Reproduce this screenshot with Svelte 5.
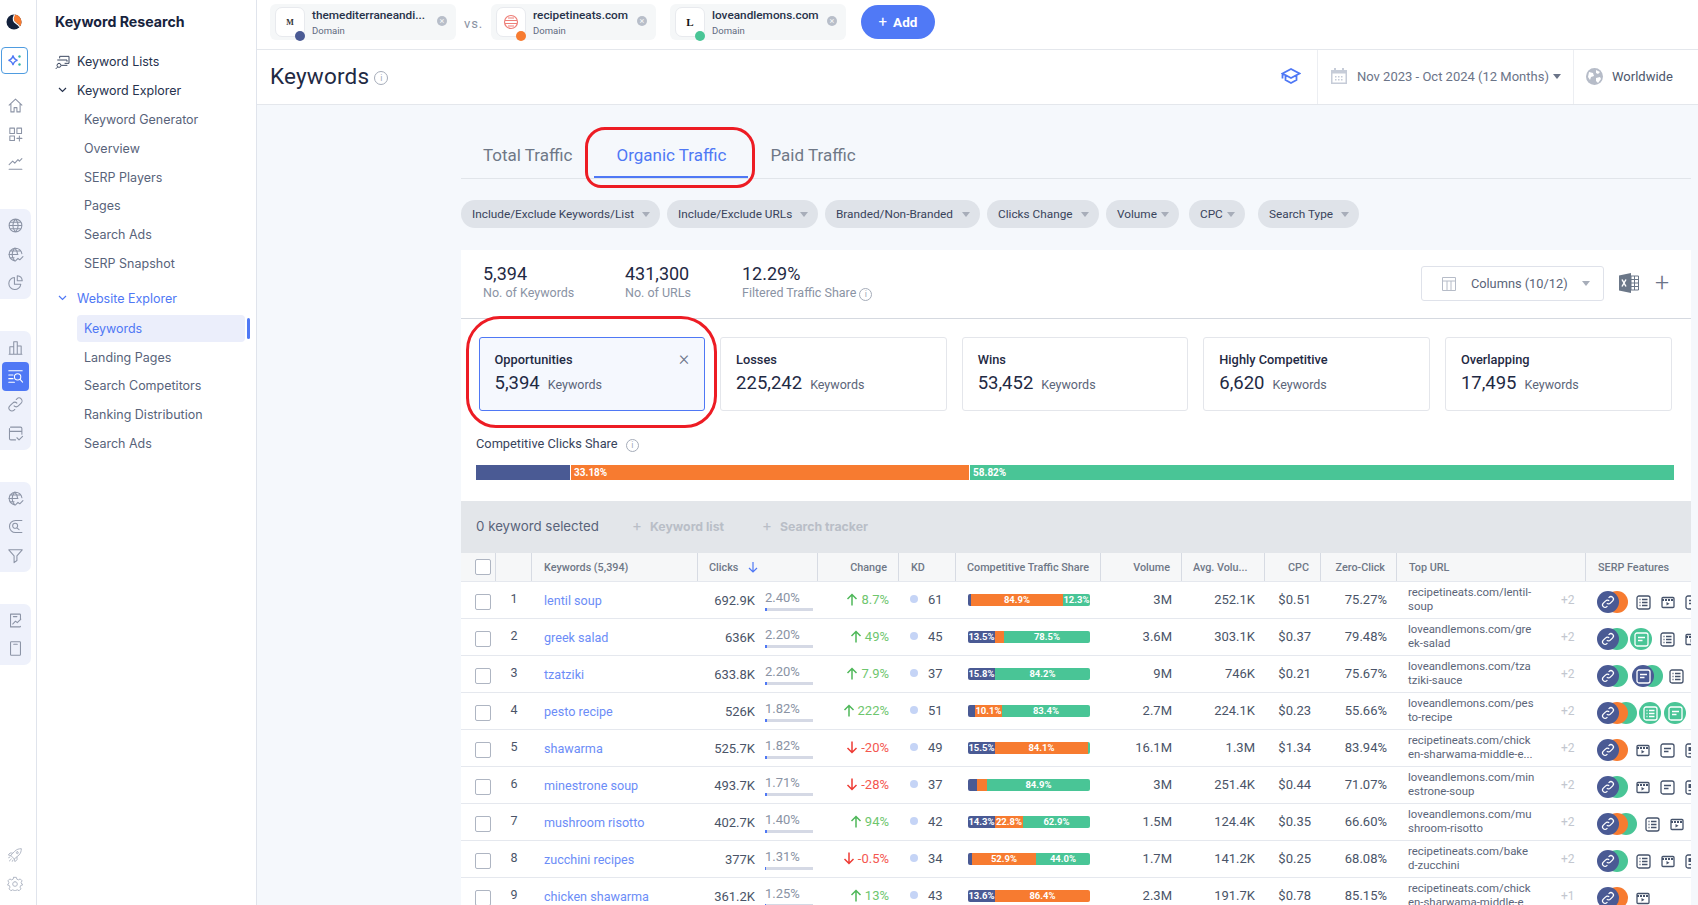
<script>
  // Icon strokes on a 24 box, shared by rail, sidebar and SERP columns.
  const ic = {
    home: 'M3 11.5 12 3l9 8.5M5.500 9.500V21h4.500v-6h4v6h4.500V9.500',
    dash: 'M4 3h6.500v7.500H4zM14 3h6.500v7.500H14zM4 14h6.500v6.500H4zM17.500 14v7M14 17.500h7',
    trend: 'M3 21.500h18M3 15l5-5 3 3 4.500-5 2 2L21 6.500',
    globe: 'M12 3a9 9 0 1 0 0 18a9 9 0 0 0 0-18M3 12h18M4 7.500h16M4 16.500h16M12 3c-5 5-5 13 0 18M12 3c5 5 5 13 0 18',
    globeT: 'M11 21a9 9 0 1 1 10-10M2.500 12h13M4 7h15M4 16.500h6M11 3c-5 5-5 13 0 18M11 3c3 3 4 6 4 9M12 21l3.500-3.500 2.500 2 4.500-4.500',
    pie: 'M10.500 5a8.500 8.500 0 1 0 9 9.500h-9zM14.500 2.500a7.500 7.500 0 0 1 7 7h-7z',
    bars: 'M3 21.500h18M4 21.500V11h5.500v10.500M9.500 21.500V4h5v17.500M14.500 21.500V10H20v11.500',
    sq: 'M2.500 4h19M2.500 10h6M2.500 15h6M2.500 20h8M15 8a4.500 4.500 0 1 0 0 9a4.500 4.500 0 0 0 0-9M18.500 16l3.500 4',
    link: 'M10 14a4 4 0 0 0 6 0l4-4a4 4 0 0 0-6-6l-1 1M14 10a4 4 0 0 0-6 0l-4 4a4 4 0 0 0 6 6l1-1',
    cal: 'M5 3h14a2 2 0 0 1 2 2v8M3.500 5v14a2 2 0 0 0 2 2H12M3.500 9h17M14 18l3 3 5-5',
    at: 'M21 3.500H12a8.500 8.500 0 0 0 0 17h9M11.500 7.500a3.500 3.500 0 1 0 0 7a3.500 3.500 0 0 0 0-7M14 14l3 2.500',
    funnel: 'M2.500 4h19l-7.500 8.500V19l-4 3v-9.500z',
    report: 'M5 3h13a1 1 0 0 1 1 1v7M5 3v18h13a1 1 0 0 0 1-1M9 6.500h5M8 17l4-4 2.500 2 5-5',
    phone: 'M6 2.500h12a1 1 0 0 1 1 1v17a1 1 0 0 1-1 1H6a1 1 0 0 1-1-1v-17a1 1 0 0 1 1-1M9.500 6h5',
    rocket: 'M3.500 21l3-3M2.500 16l2-1M8 21.500l1-2M12 6c2.500-2.500 6-3.500 9.500-3.500C21.500 6 20.500 9.500 18 12l-7 6-5-5zM8 9H4.500L2 12l4 1M15 15v4l-3 3-1-4M15.500 7a1.500 1.500 0 1 0 0 3a1.500 1.500 0 0 0 0-3',
    gear: 'M10 2h4l.8 2.800 2.400 1 2.600-1.400 2.800 2.800-1.400 2.600 1 2.400 2.800.8v0M12 8.500a3.500 3.500 0 1 0 0 7a3.500 3.500 0 0 0 0-7M10 2l-.8 2.800-2.400 1-2.600-1.400-2.800 2.800 1.400 2.600-1 2.400L.5 13.500l.6 0 2.400.8 1 2.400-1.400 2.600 2.800 2.800 2.600-1.400 2.400 1 2.200 0 2.400-1 2.600 1.400 2.800-2.800-1.400-2.600 1-2.400 2.600-.8',
    lists: 'M7 6V3.500h14V14h-6M4 9h14v2M6 14a3 3 0 1 0 0 6a3 3 0 0 0 0-6M3.500 20 1.500 22M10 17h8'
  };

  const railGroups = [
    { plain: true, items: ['home', 'dash', 'trend'] },
    { items: ['globe', 'globeT', 'pie'] },
    { items: ['bars', 'sq', 'link', 'cal'] },
    { items: ['globeT', 'at', 'funnel'] },
    { items: ['report', 'phone'] }
  ];

  const explorer = ['Keyword Generator', 'Overview', 'SERP Players', 'Pages', 'Search Ads', 'SERP Snapshot'];
  const website = ['Keywords', 'Landing Pages', 'Search Competitors', 'Ranking Distribution', 'Search Ads'];

  // label, width, extra space before the pill
  const filters = [
    ['Include/Exclude Keywords/List', 199, 0], ['Include/Exclude URLs', 151, 0], ['Branded/Non-Branded', 155, 0],
    ['Clicks Change', 112, 0], ['Volume', 73, 0], ['CPC', 56, 3], ['Search Type', 101, 6]
  ];
  const cards = [
    ['Opportunities', '5,394'], ['Losses', '225,242'], ['Wins', '53,452'],
    ['Highly Competitive', '6,620'], ['Overlapping', '17,495']
  ];

  const N = '#4a5a94', O = '#f77b30', G = '#49c596';
  // share: pixel widths of the three segments with the percentage they print
  const rows = [
    { kw: 'lentil soup', clicks: '692.9K', pct: '2.40%', w: 5, ch: '8.7%', up: true, kd: 61, share: [[3, ''], [92, '84.9%'], [27, '12.3%']], vol: '3M', avg: '252.1K', cpc: '$0.51', zero: '75.27%', url: 'recipetineats.com/lentil-\nsoup', more: '+2', serp: [[N, O], 'list', 'video', 'doc'] },
    { kw: 'greek salad', clicks: '636K', pct: '2.20%', w: 5, ch: '49%', up: true, kd: 45, share: [[27, '13.5%'], [9, ''], [86, '78.5%']], vol: '3.6M', avg: '303.1K', cpc: '$0.37', zero: '79.48%', url: 'loveandlemons.com/gre\nek-salad', more: '+2', serp: [[N, G], 'gdoc', 'list', 'video'] },
    { kw: 'tzatziki', clicks: '633.8K', pct: '2.20%', w: 5, ch: '7.9%', up: true, kd: 37, share: [[27, '15.8%'], [0, ''], [95, '84.2%']], vol: '9M', avg: '746K', cpc: '$0.21', zero: '75.67%', url: 'loveandlemons.com/tza\ntziki-sauce', more: '+2', serp: [[N, G], 'ndoc', 'list'] },
    { kw: 'pesto recipe', clicks: '526K', pct: '1.82%', w: 4, ch: '222%', up: true, kd: 51, share: [[7, ''], [27, '10.1%'], [88, '83.4%']], vol: '2.7M', avg: '224.1K', cpc: '$0.23', zero: '55.66%', url: 'loveandlemons.com/pes\nto-recipe', more: '+2', serp: [[N, O, G], 'glist', 'gdoc'] },
    { kw: 'shawarma', clicks: '525.7K', pct: '1.82%', w: 4, ch: '-20%', up: false, kd: 49, share: [[27, '15.5%'], [93, '84.1%'], [2, '']], vol: '16.1M', avg: '1.3M', cpc: '$1.34', zero: '83.94%', url: 'recipetineats.com/chick\nen-sharwama-middle-e...', more: '+2', serp: [[N, O], 'video', 'doc', 'card'] },
    { kw: 'minestrone soup', clicks: '493.7K', pct: '1.71%', w: 4, ch: '-28%', up: false, kd: 37, share: [[9, ''], [10, ''], [103, '84.9%']], vol: '3M', avg: '251.4K', cpc: '$0.44', zero: '71.07%', url: 'loveandlemons.com/min\nestrone-soup', more: '+2', serp: [[N, G], 'video', 'doc', 'card'] },
    { kw: 'mushroom risotto', clicks: '402.7K', pct: '1.40%', w: 4, ch: '94%', up: true, kd: 42, share: [[27, '14.3%'], [28, '22.8%'], [67, '62.9%']], vol: '1.5M', avg: '124.4K', cpc: '$0.35', zero: '66.60%', url: 'loveandlemons.com/mu\nshroom-risotto', more: '+2', serp: [[N, O, G], 'list', 'video'] },
    { kw: 'zucchini recipes', clicks: '377K', pct: '1.31%', w: 3, ch: '-0.5%', up: false, kd: 34, share: [[4, ''], [64, '52.9%'], [54, '44.0%']], vol: '1.7M', avg: '141.2K', cpc: '$0.25', zero: '68.08%', url: 'recipetineats.com/bake\nd-zucchini', more: '+2', serp: [[N, G], 'list', 'video', 'card'] },
    { kw: 'chicken shawarma', clicks: '361.2K', pct: '1.25%', w: 3, ch: '13%', up: true, kd: 43, share: [[27, '13.6%'], [95, '86.4%'], [0, '']], vol: '2.3M', avg: '191.7K', cpc: '$0.78', zero: '85.15%', url: 'recipetineats.com/chick\nen-sharwama-middle-e', more: '+1', serp: [[N, O], 'video'] }
  ];
  const segColors = [N, O, G];
</script>

{#snippet icon(name, size = 16)}
  <svg class="ico" width={size} height={size} viewBox="0 0 24 24"><path d={ic[name]} /></svg>
{/snippet}

{#snippet chevron()}
  <svg width="9" height="6" viewBox="0 0 9 6" fill="none" stroke="currentColor" stroke-width="1.200"><path d="M1 1l3.500 3.500L8 1" /></svg>
{/snippet}

{#snippet serpIcon(kind)}
  {#if kind === 'list' || kind === 'glist'}
    <svg width="15" height="15" viewBox="0 0 15 15" fill="none" stroke="currentColor" stroke-width="1.300"><rect x="1" y="1" width="13" height="13" rx="2" /><path d="M3.500 4.500h1M6 4.500h5.500M3.500 7.500h1M6 7.500h5.500M3.500 10.500h1M6 10.500h5.500" /></svg>
  {:else if kind === 'video'}
    <svg width="14" height="13" viewBox="0 0 14 13" fill="none" stroke="currentColor" stroke-width="1.300"><rect x="1" y="1.500" width="12" height="10" rx="1" /><path d="M1 4h12" stroke-width="2" stroke-dasharray="2 1" /><path d="M5.500 6v3.500L8.500 7.700z" fill="currentColor" stroke="none" /></svg>
  {:else if kind === 'card'}
    <svg width="15" height="15" viewBox="0 0 15 15" fill="none" stroke="currentColor" stroke-width="1.300"><rect x="1" y="1" width="13" height="13" rx="2" /><rect x="3.500" y="4" width="3.500" height="4" fill="currentColor" stroke="none" /><path d="M3.500 10.500h8" /></svg>
  {:else}
    <svg width="15" height="15" viewBox="0 0 15 15" fill="none" stroke="currentColor" stroke-width="1.300"><rect x="1" y="1" width="13" height="13" rx="2" /><path d="M4 5.500h7M4 8.500h4.500" /></svg>
  {/if}
{/snippet}

<div class="app">
  <nav class="rail">
    <svg class="logo" width="16" height="16" viewBox="0 0 16 16">
      <circle cx="8" cy="8" r="7.500" fill="#13213c" />
      <path d="M8.500.5a7.500 7.500 0 0 1 5 12.500C14 9.500 8.500 9 8 6 7.700 4 8 2 8.500.5z" fill="#f77b30" />
      <path d="M8.500.5C7.500 2.500 7 4.500 7.500 6.500 8.300 9.500 13 10 13.500 13" fill="none" stroke="#fff" stroke-width="1.100" />
    </svg>
    <div class="spark">
      <svg width="16" height="16" viewBox="0 0 16 16"><path d="M6 2.500c.6 3 1.500 4 4.500 4.800C7.500 8 6.600 9 6 12 5.400 9 4.500 8 1.500 7.300 4.500 6.500 5.400 5.500 6 2.500z" fill="none" stroke="#4f78f5" stroke-width="1.300" /><circle cx="12.500" cy="3.500" r="1.200" fill="#35b6a8" /><circle cx="12.500" cy="11.500" r="1.200" fill="#35b6a8" /></svg>
    </div>
    {#each railGroups as g}
      <div class="group" class:plain={g.plain}>
        {#each g.items as it}
          <span class="rail-btn" class:on={it === 'sq'}>{@render icon(it, 17)}</span>
        {/each}
      </div>
    {/each}
    <div class="rail-foot">
      <span class="rail-btn faint">{@render icon('rocket', 16)}</span>
      <span class="rail-btn faint">{@render icon('gear', 16)}</span>
    </div>
  </nav>

  <aside class="side">
    <h2>Keyword Research</h2>
    <div class="top-item first"><span class="lead">{@render icon('lists', 16)}</span>Keyword Lists</div>
    <div class="top-item"><span class="lead chev">{@render chevron()}</span>Keyword Explorer</div>
    <div class="subs one">{#each explorer as s}<div class="sub">{s}</div>{/each}</div>
    <div class="top-item blue"><span class="lead chev">{@render chevron()}</span>Website Explorer</div>
    <div class="subs two">{#each website as s, i}<div class="sub" class:active={i === 0}>{s}</div>{/each}</div>
  </aside>

  <main class="main">
    <header class="topbar">
      <div class="chip c1">
        <span class="fav"><b class="m">M</b><i style="background:{N}"></i></span>
        <span class="chip-txt"><b>themediterraneandi...</b><small>Domain</small></span>
        <span class="x">×</span>
      </div>
      <span class="vs">vs.</span>
      <div class="chip c2">
        <span class="fav">
          <svg width="16" height="16" viewBox="0 0 16 16" fill="none" stroke="#ee7f78" stroke-width="1.200"><circle cx="8" cy="8" r="6.500" /><path d="M2 6.500h12M2 9.500h12M5 4h6M5 12h6" /></svg>
          <i style="background:{O}"></i>
        </span>
        <span class="chip-txt"><b>recipetineats.com</b><small>Domain</small></span>
        <span class="x">×</span>
      </div>
      <div class="chip c3">
        <span class="fav"><b class="l">L</b><i style="background:{G}"></i></span>
        <span class="chip-txt"><b>loveandlemons.com</b><small>Domain</small></span>
        <span class="x">×</span>
      </div>
      <button class="add"><span>+</span>Add</button>
    </header>

    <section class="head">
      <h1>Keywords</h1>
      <span class="info big">i</span>
      <span class="cap">
        <svg width="20" height="18" viewBox="0 0 20 18" fill="none" stroke="#4f78f5" stroke-width="1.800"><path d="M1.500 6.500 10 2l8.500 4.500L10 11zM4.500 8.500V13l5.500 3 5.500-3V8.500M1.500 6.500v5" /></svg>
      </span>
      <div class="range">
        <svg width="18" height="18" viewBox="0 0 18 18" fill="#c6ccd8"><path d="M1 3h16v14H1zM4 1h2v3H4zM12 1h2v3h-2z" /><path d="M2.500 6.500h13v9h-13z" fill="#fff" /><path d="M5 9h1.500v1.500H5zM8 9h1.500v1.500H8zM11 9h1.500v1.500H11zM5 12h1.500v1.500H5zM8 12h1.500v1.500H8zM11 12h1.500v1.500H11z" /></svg>
        <span>Nov 2023 - Oct 2024 (12 Months)</span><i class="caret dark"></i>
      </div>
      <div class="geo">
        <svg width="17" height="17" viewBox="0 0 17 17"><circle cx="8.500" cy="8.500" r="8.500" fill="#b6bcc8" /><path d="M3 4l4 1 1 3-3 1-1 3-2-3zM10 2l4 2-2 2-2-1zM10 10l4-1 1 2-3 4-2-2z" fill="#fff" /></svg>
        <span>Worldwide</span>
      </div>
    </section>

    <div class="content">
      <div class="tabs">
        <span class="tab">Total Traffic</span>
        <span class="tab sel">Organic Traffic</span>
        <span class="tab">Paid Traffic</span>
      </div>

      <div class="filters">
        {#each filters as f}
          <span class="pill" style="width:{f[1]}px;margin-left:{f[2]}px">{f[0]}<i class="caret"></i></span>
        {/each}
      </div>

      <section class="panel">
        <div class="stats">
          <div class="stat s1"><strong>5,394</strong><span>No. of Keywords</span></div>
          <div class="stat s2"><strong>431,300</strong><span>No. of URLs</span></div>
          <div class="stat"><strong>12.29%</strong><span>Filtered Traffic Share <em class="info">i</em></span></div>
          <div class="cols">
            <svg width="14" height="14" viewBox="0 0 14 14" fill="none" stroke="#b6bcc8"><path d="M.5.5h13v13H.5zM.5 4h13M5 4v9.500M9 4v9.500" /></svg>
            <span>Columns (10/12)</span><i class="caret"></i>
          </div>
          <svg class="xls" width="20" height="20" viewBox="0 0 20 20"><path d="M0 2.500 12 0v20L0 17.500z" fill="#6b7788" /><path d="M12 3h7.500v14H12z" fill="#fff" stroke="#6b7788" /><path d="M12 6.500h7.500M12 10h7.500M12 13.500h7.500M15.500 3v14" stroke="#6b7788" /><path d="m3 6.500 4 7M7 6.500l-4 7" stroke="#fff" stroke-width="1.500" /></svg>
          <span class="plus">+</span>
        </div>

        <div class="cards">
          {#each cards as c, i}
            <div class="card" class:picked={i === 0}>
              <b>{c[0]}</b>
              <div class="val"><strong>{c[1]}</strong><span>Keywords</span></div>
              {#if i === 0}<span class="close">×</span>{/if}
            </div>
          {/each}
        </div>

        <div class="clicks-lbl">Competitive Clicks Share <em class="info">i</em></div>
        <div class="share-bar">
          <span class="sb1"></span><span class="sb2">33.18%</span><span class="sb3">58.82%</span>
        </div>

        <div class="toolbar">
          <span class="sel-count">0 keyword selected</span>
          <span class="tool"><i>+</i>Keyword list</span>
          <span class="tool"><i>+</i>Search tracker</span>
        </div>

        <div class="thead grid">
          <div class="th"><span class="box"></span></div>
          <div class="th"></div>
          <div class="th pl">Keywords (5,394)</div>
          <div class="th clicks-h">Clicks
            <svg width="12" height="12" viewBox="0 0 12 12" fill="none" stroke="#4f78f5" stroke-width="1.200"><path d="M6 1v10M2 7l4 4 4-4" /></svg>
          </div>
          <div class="th r">Change</div>
          <div class="th pl2">KD</div>
          <div class="th pl3">Competitive Traffic Share</div>
          <div class="th r">Volume</div>
          <div class="th r ell">Avg. Volu...</div>
          <div class="th r">CPC</div>
          <div class="th r">Zero-Click</div>
          <div class="th pl4">Top URL</div>
          <div class="th pl4 last">SERP Features</div>
        </div>

        {#each rows as r, i}
          <div class="row grid">
            <div class="cell"><span class="box"></span></div>
            <div class="cell num">{i + 1}</div>
            <div class="cell kw">{r.kw}</div>
            <div class="cell clicks">
              <span class="cv">{r.clicks}</span>
              <span class="cp">{r.pct}<span class="track"><span style="width:{r.w}%"></span></span></span>
            </div>
            <div class="cell change" class:down={!r.up}>
              <svg width="12" height="13" viewBox="0 0 12 13" fill="none" stroke="currentColor" stroke-width="1.500">
                {#if r.up}<path d="M6 12.500V1.500M1.500 6 6 1.500 10.500 6" />{:else}<path d="M6 .5v11M1.500 7 6 11.500 10.500 7" />{/if}
              </svg>{r.ch}
            </div>
            <div class="cell kd"><i></i>{r.kd}</div>
            <div class="cell share">
              <div class="bar">
                {#each r.share as s, k}
                  {#if s[0] > 0}<span style="width:{s[0]}px;background:{segColors[k]}">{s[1]}</span>{/if}
                {/each}
              </div>
            </div>
            <div class="cell r">{r.vol}</div>
            <div class="cell r">{r.avg}</div>
            <div class="cell r">{r.cpc}</div>
            <div class="cell r">{r.zero}</div>
            <div class="cell top">
              <span class="url">{r.url}</span>
              <span class="more">{r.more}</span>
            </div>
            <div class="cell serp">
              {#each r.serp as s}
                {#if Array.isArray(s)}
                  <span class="stack" style="width:{22 + (s.length - 1) * 9}px">
                    {#each s as col, k}
                      <span class="disc" style="background:{col};left:{k * 9}px;z-index:{5 - k}">
                        {#if k === 0}<svg width="14" height="14" viewBox="0 0 24 24" fill="none" stroke="#fff" stroke-width="2.200"><path d={ic.link} /></svg>{/if}
                      </span>
                    {/each}
                  </span>
                {:else if s === 'gdoc' || s === 'glist'}
                  <span class="disc solo green">{@render serpIcon(s)}</span>
                {:else if s === 'ndoc'}
                  <span class="stack pair" style="width:31px">
                    <span class="disc" style="background:{N};left:0;z-index:2;color:#fff">{@render serpIcon('doc')}</span>
                    <span class="disc" style="background:{G};left:9px"></span>
                  </span>
                {:else}
                  <span class="plain-ico">{@render serpIcon(s)}</span>
                {/if}
              {/each}
            </div>
          </div>
        {/each}
      </section>

      <!-- marker rings drawn on the original capture -->
      <span class="ring r-tab"></span>
      <span class="ring r-card"></span>
    </div>
  </main>
</div>

<style>
  :global(html), :global(body) { margin: 0; overflow: hidden; }
  :global(body) { font-family: Roboto, "Liberation Sans", sans-serif; color: #1f2a44; background: #fff; }

  .app { display: flex; height: 905px; overflow: hidden; }
  i, em { font-style: normal; }
  .ico { fill: none; stroke: currentColor; stroke-width: 1.500; stroke-linecap: round; stroke-linejoin: round; display: block; }

  /* rail */
  .rail { width: 36px; flex: none; border-right: 1px solid #e0e4ec; display: flex; flex-direction: column; color: #8c94a6; box-sizing: content-box; }
  .logo { margin: 14px 0 0 6px; display: block; }
  .spark { width: 25px; height: 25px; margin: 17px 0 0 1px; border: 1px solid #4f9ce0; border-radius: 4px; display: flex; align-items: center; justify-content: center; }
  .group { width: 31px; background: #eef1fb; border-radius: 0 7px 7px 0; display: flex; flex-direction: column; align-items: center; padding: 2px 0; margin-top: 32px; box-sizing: border-box; }
  .group.plain { background: none; margin-top: 15px; padding: 2px 0 0; }
  .rail-btn { width: 27px; height: 28.700px; display: flex; align-items: center; justify-content: center; border-radius: 4px; }
  .rail-btn.on { background: #4f78f5; color: #fff; }
  .rail-btn.faint { color: #b3b9c6; }
  .rail-foot { margin-top: auto; padding-bottom: 7px; padding-left: 1px; }

  /* sidebar */
  .side { width: 220px; flex: none; border-right: 1px solid #e0e4ec; font-family: Inter, "Noto Sans", sans-serif; padding-left: 18px; padding-right: 6px; box-sizing: border-box; }
  .side h2 { font-size: 14.200px; font-weight: 700; color: #17233d; margin: 0; line-height: 44px; }
  .top-item { position: relative; font-size: 12.500px; color: #26324d; height: 28.500px; line-height: 28.500px; padding-left: 22px; }
  .top-item.first { margin-top: 4px; }
  .top-item.blue { color: #4f78f5; }
  .lead { position: absolute; left: 0; top: 6px; color: #3c4860; }
  .chev { left: 3px; top: 10px; line-height: 0; color: inherit; }
  .subs.one { padding: 1px 0 6px; }
  .subs.two { padding-top: 1.500px; }
  .sub { font-size: 12.500px; color: #58637a; height: 27px; line-height: 27px; margin: 0 5px 1.800px 22px; padding-left: 7px; border-radius: 4px; position: relative; }
  .sub.active { background: #ebeefb; color: #4f78f5; }
  .sub.active::after { content: ""; position: absolute; right: -5px; top: 3px; width: 3px; height: 21px; background: #4f78f5; border-radius: 2px; }

  /* top bar */
  .main { flex: 1; min-width: 0; background: #f5f8fc; display: flex; flex-direction: column; }
  .topbar { height: 50px; flex: none; box-sizing: border-box; background: #fff; border-bottom: 1px solid #e4e7ec; display: flex; align-items: center; padding-left: 13px; }
  .chip { height: 36px; background: #f5f7f8; border-radius: 6px; display: flex; align-items: center; padding: 0 5px; box-sizing: border-box; position: relative; margin-top: -5px; }
  .c1 { width: 186px; } .c2 { width: 165px; } .c3 { width: 176px; margin-left: 14px; }
  .fav { width: 30px; height: 30px; background: #fff; border: 1px solid #e8eaee; border-radius: 7px; box-sizing: border-box; display: flex; align-items: center; justify-content: center; position: relative; flex: none; }
  .fav i { position: absolute; right: -1px; bottom: -5px; width: 10px; height: 10px; border-radius: 50%; }
  .fav b { font-family: "Liberation Serif", serif; font-size: 8px; color: #333; }
  .fav .l { font-size: 11px; color: #111; }
  .chip-txt { display: flex; flex-direction: column; margin-left: 7px; padding-top: 1px; line-height: 1; white-space: nowrap; }
  .chip-txt b { font-weight: 500; font-size: 11.800px; color: #27324a; margin-bottom: 4px; }
  .chip-txt small { font-size: 9.500px; color: #5f6a80; }
  .x { position: absolute; right: 9px; top: 12px; width: 10px; height: 10px; border-radius: 50%; background: #b8bec9; color: #f5f7f8; font-size: 9px; line-height: 10px; text-align: center; }
  .vs { width: 35px; text-align: center; color: #8a92a3; font-size: 13px; letter-spacing: .8px; margin-top: -3px; }
  .add { margin-left: 15px; margin-top: -5px; width: 74px; height: 34px; border: 0; border-radius: 17px; background: #5079f6; color: #fff; font: 700 13.500px Roboto, sans-serif; display: flex; align-items: center; justify-content: center; gap: 6px; padding: 0; }
  .add span { font-weight: 400; font-size: 15px; }

  /* page header */
  .head { height: 55px; flex: none; box-sizing: border-box; background: #fff; border-bottom: 1px solid #e4e7ec; display: flex; align-items: center; padding-left: 13px; }
  .head h1 { margin: 0 0 2px; font-weight: 400; font-size: 22.500px; color: #1f2a44; letter-spacing: .2px; }
  .info { display: inline-block; width: 11px; height: 11px; border: 1px solid #a5acb9; color: #a5acb9; border-radius: 50%; font-size: 9px; line-height: 11px; text-align: center; font-style: normal; vertical-align: 0; }
  .info.big { margin: 1px 0 0 5px; width: 12px; height: 12px; line-height: 12px; }
  .cap { margin: 0 16px 2px auto; display: flex; }
  .range { height: 100%; border-left: 1px solid #eceef2; width: 256px; box-sizing: border-box; display: flex; align-items: center; padding: 0 0 2px 12px; color: #6b7488; font-size: 13px; white-space: nowrap; }
  .range span { margin-left: 9px; }
  .geo { height: 100%; border-left: 1px solid #eceef2; width: 125px; box-sizing: border-box; display: flex; align-items: center; padding: 0 0 2px 12px; color: #4d576c; font-size: 13px; }
  .geo span { margin-left: 9px; }
  .caret { display: inline-block; width: 0; height: 0; border: 4.500px solid transparent; border-top: 5px solid #a7adb9; border-bottom: 0; }
  .caret.dark { border-top-color: #6b7488; margin-left: 4px; }

  /* content */
  .content { position: relative; margin: 0 7px 0 204px; padding-top: 29px; flex: 1; min-height: 0; }
  .tabs { height: 44px; border-bottom: 1px solid #e1e5ea; display: flex; box-sizing: content-box; }
  .tab { padding: 0 22px; font-size: 17px; line-height: 43px; color: #6f7887; height: 44px; box-sizing: border-box; }
  .tab.sel { color: #4f78f5; border-bottom: 2px solid #4f78f5; }
  .filters { display: flex; gap: 7px; margin-top: 21px; }
  .pill { height: 28px; background: #dfe3e9; border-radius: 14px; display: flex; align-items: center; justify-content: space-between; padding: 0 10px 0 11px; box-sizing: border-box; font-size: 11.800px; color: #39445c; white-space: nowrap; }

  .panel { margin-top: 22px; background: #fff; }
  .stats { height: 69px; border-bottom: 1.500px solid #d5d9e0; box-sizing: border-box; display: flex; align-items: flex-start; padding: 13px 0 0 22px; }
  .stat { display: flex; flex-direction: column; }
  .s1 { width: 142px; } .s2 { width: 117px; }
  .stat strong { font-weight: 400; font-size: 18px; line-height: 22px; color: #1f2a44; }
  .stat span { font-size: 12.500px; line-height: 15px; color: #8a93a4; }
  .cols { margin-left: auto; margin-top: 3px; width: 183px; height: 35px; box-sizing: border-box; border: 1px solid #dfe2ea; border-radius: 3px; display: flex; align-items: center; padding: 0 13px 0 20px; font-size: 12.800px; color: #5b6579; }
  .cols span { margin-left: 15px; margin-right: auto; }
  .xls { margin: 10px 0 0 15px; }
  .plus { font-size: 25px; font-weight: 300; color: #6b7488; margin: 5px 22px 0 16px; line-height: 30px; }

  .cards { display: grid; grid-template-columns: repeat(5, 226.800px); gap: 14.800px; padding: 18px 0 0 17.500px; }
  .card { height: 74px; box-sizing: border-box; border: 1px solid #e4e6eb; border-radius: 3px; padding: 14px 15px 0; position: relative; }
  .card.picked { background: #f5f8fe; border-color: #4f78f5; }
  .card b { font-weight: 500; font-size: 12.800px; color: #1f2a44; display: block; line-height: 16px; }
  .val { display: flex; align-items: baseline; margin-top: 4px; }
  .val strong { font-weight: 400; font-size: 18.500px; color: #1f2a44; }
  .val span { font-size: 12.500px; color: #5b6579; margin-left: 8px; }
  .close { position: absolute; right: 15px; top: 10px; font-size: 20px; font-weight: 300; line-height: 20px; color: #6b7488; }

  .clicks-lbl { margin: 25px 0 0 15px; font-size: 12.800px; line-height: 16px; color: #39445c; }
  .clicks-lbl .info { margin-left: 5px; }
  .share-bar { display: flex; height: 15px; width: 1198px; margin: 13px 0 0 15px; font-size: 10px; font-weight: 700; line-height: 15px; color: #fff; }
  .share-bar span { padding-left: 3px; box-sizing: border-box; border-right: 1px solid #fff; }
  .sb1 { width: 95px; background: #4a5a94; }
  .sb2 { width: 399px; background: #f77b30; }
  .sb3 { flex: 1; background: #49c596; border-right: 0 !important; }

  .toolbar { margin-top: 21px; height: 52px; box-sizing: border-box; background: #e3e6ea; display: flex; align-items: center; padding: 0 0 3px 15px; font-family: Inter, sans-serif; }
  .sel-count { font-size: 13.300px; color: #59637a; width: 156px; }
  .tool { font-size: 12.300px; font-weight: 700; color: #b9bec7; width: 130px; white-space: nowrap; }
  .tool i { font-weight: 400; font-size: 15px; margin-right: 8px; }

  /* table */
  .grid { display: grid; grid-template-columns: 35px 36px 166px 120px 81px 57px 145px 81px 83px 56px 76px 189px 105px; }
  .thead { height: 28px; background: #f6f7f8; border-bottom: 1px solid #e5e8ee; box-sizing: content-box; }
  .th { border-right: 1.500px solid #d7dbe3; box-sizing: border-box; display: flex; align-items: center; font-size: 10.800px; font-weight: 500; color: #6f7887; white-space: nowrap; overflow: hidden; }
  .th.last { border-right: 0; }
  .th.r { justify-content: flex-end; padding-right: 11px; }
  .th.ell { justify-content: flex-start; padding-left: 11px; }
  .pl { padding-left: 12px; }
  .clicks-h { padding-left: 11px; gap: 9px; }
  .pl2 { padding-left: 12px; }
  .pl3 { padding-left: 11px; }
  .pl4 { padding-left: 12px; }

  .box { width: 16px; height: 16px; box-sizing: border-box; border: 1.500px solid #aeb5c2; border-radius: 2px; margin-left: 14px; background: #fff; display: block; flex: none; }
  .row { height: 37px; border-bottom: 1px solid #e5e8ee; box-sizing: border-box; font-size: 13px; color: #4a5468; }
  .row .box { margin-top: 3px; }
  .cell { display: flex; align-items: center; min-width: 0; white-space: nowrap; }
  .cell.r { justify-content: flex-end; padding-right: 10px; color: #4a5468; padding-bottom: 2px; }
  .num { justify-content: center; padding-bottom: 3px; box-sizing: border-box; font-size: 12.500px; }
  .kw { color: #6c8df7; padding-left: 12px; padding-top: 1px; font-size: 12.600px; }
  .clicks { padding-right: 5px; justify-content: flex-end; }
  .cv { padding-top: 1px; }
  .cp { width: 48px; margin-left: 10px; position: relative; color: #8a93a4; padding-bottom: 5px; margin-right: 0; }
  .track { position: absolute; left: 0; right: 0; bottom: -1px; height: 3px; background: #d5d9e5; }
  .track span { display: block; height: 100%; background: #4f78f5; }
  .change { justify-content: flex-end; padding-right: 10px; color: #6ec66e; padding-bottom: 2px; gap: 3px; }
  .change svg { color: #4fb85a; }
  .change.down { color: #f4564f; }
  .change.down svg { color: #ee3b34; }
  .kd { padding-left: 11px; padding-bottom: 2px; }
  .kd i { width: 8px; height: 8px; border-radius: 50%; background: #c5d4f6; margin-right: 10px; }
  .share { padding-left: 12px; padding-bottom: 1px; }
  .bar { width: 122px; height: 12px; display: flex; border-radius: 2px; overflow: hidden; flex: none; }
  .bar span { display: block; flex: none; font-size: 9.500px; font-weight: 700; line-height: 12px; text-align: center; color: #fff; overflow: hidden; white-space: nowrap; }
  .top { padding: 0 0 2px 11px; position: relative; }
  .url { font-size: 11.400px; line-height: 14px; color: #5b6579; white-space: pre; display: block; }
  .more { position: absolute; left: 164px; top: 11px; font-size: 12px; color: #c3c7cf; }
  .serp { padding-left: 11px; gap: 0; overflow: hidden; padding-top: 4px; }
  .stack { position: relative; height: 22px; flex: none; margin-right: 8px; }
  .stack.pair { margin: 0 6px 0 -4px; }
  .disc { position: absolute; top: 0; width: 22px; height: 22px; border-radius: 50%; display: flex; align-items: center; justify-content: center; }
  .disc.solo { position: static; flex: none; margin: 0 3px 0 -6px; }
  .disc.solo + .disc.solo { margin-left: 0; }
  .disc.solo + .plain-ico { margin-left: 5px; }
  .disc.green { background: #49c596; color: #fff; }
  .plain-ico { color: #46536b; flex: none; margin-right: 10px; display: flex; }

  .ring { position: absolute; border: 3.500px solid #ed1c24; box-sizing: border-box; z-index: 9; pointer-events: none; }
  .r-tab { left: 124px; top: 22px; width: 170px; height: 61px; border-radius: 20px 22px 18px 16px; }
  .r-card { left: 5px; top: 211px; width: 251px; height: 112px; border-radius: 34px 36px 32px 30px; }
</style>
